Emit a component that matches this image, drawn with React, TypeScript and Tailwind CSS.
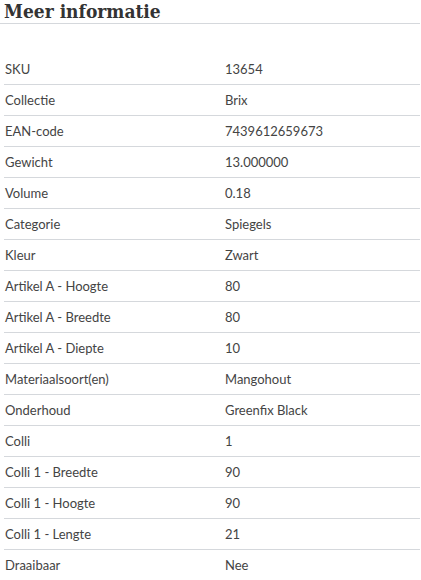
const rows: [string, string][] = [
  ['SKU', '13654'],
  ['Collectie', 'Brix'],
  ['EAN-code', '7439612659673'],
  ['Gewicht', '13.000000'],
  ['Volume', '0.18'],
  ['Categorie', 'Spiegels'],
  ['Kleur', 'Zwart'],
  ['Artikel A - Hoogte', '80'],
  ['Artikel A - Breedte', '80'],
  ['Artikel A - Diepte', '10'],
  ['Materiaalsoort(en)', 'Mangohout'],
  ['Onderhoud', 'Greenfix Black'],
  ['Colli', '1'],
  ['Colli 1 - Breedte', '90'],
  ['Colli 1 - Hoogte', '90'],
  ['Colli 1 - Lengte', '21'],
  ['Draaibaar', 'Nee'],
];

export default function App() {
  return (
    <div className="w-[421px] bg-white">
      <h2 className="w-[420px] border-b border-[#d5d8dc] pl-1 pt-px pb-px font-['DejaVu_Serif_Condensed','DejaVu_Serif',serif] text-[19px] font-bold leading-[21px] text-[#333]">
        Meer informatie
      </h2>
      <div className="ml-1 mt-[30px] w-[416px] font-['Lato',sans-serif] text-[13px] text-[#444]">
        {rows.map(([label, value]) => (
          <div key={label} className="flex h-[31px] items-center border-b border-[#d5d8dc] pt-px">
            <div className="w-[221px] pl-px">{label}</div>
            <div>{value}</div>
          </div>
        ))}
      </div>
    </div>
  );
}
